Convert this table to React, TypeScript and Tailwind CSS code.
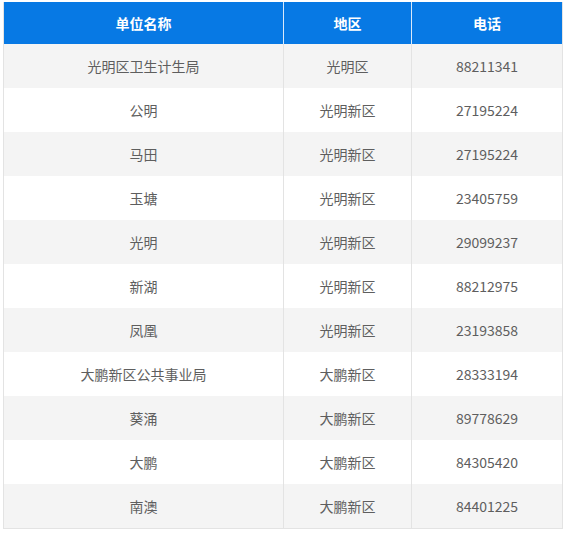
const rows: [string, string, string][] = [
  ["光明区卫生计生局", "光明区", "88211341"],
  ["公明", "光明新区", "27195224"],
  ["马田", "光明新区", "27195224"],
  ["玉塘", "光明新区", "23405759"],
  ["光明", "光明新区", "29099237"],
  ["新湖", "光明新区", "88212975"],
  ["凤凰", "光明新区", "23193858"],
  ["大鹏新区公共事业局", "大鹏新区", "28333194"],
  ["葵涌", "大鹏新区", "89778629"],
  ["大鹏", "大鹏新区", "84305420"],
  ["南澳", "大鹏新区", "84401225"],
];

const App = () => {
  return (
    <div
      className="pt-[2px] pl-[3px] bg-white"
      style={{ fontFamily: '"Microsoft YaHei", "Noto Sans CJK SC", "Noto Sans", sans-serif' }}
    >
      <div className="w-[560px] border-x border-b border-[#e3e3e3]">
        <div className="grid grid-cols-[280px_128px_150px] h-[42px] bg-[#0779e4] text-white text-[14px] font-bold">
          <div className="flex items-center justify-center border-r border-[#d9e9fa]">单位名称</div>
          <div className="flex items-center justify-center border-r border-[#d9e9fa]">地区</div>
          <div className="flex items-center justify-center">电话</div>
        </div>
        {rows.map((r, i) => (
          <div
            key={i}
            className={`grid grid-cols-[280px_128px_150px] h-[44px] text-[14px] text-[#5e5e5e] ${
              i % 2 === 0 ? "bg-[#f4f4f4]" : "bg-white"
            }`}
          >
            <div className="flex items-center justify-center border-r border-[#e3e3e3]">{r[0]}</div>
            <div className="flex items-center justify-center border-r border-[#e3e3e3]">{r[1]}</div>
            <div className="flex items-center justify-center">{r[2]}</div>
          </div>
        ))}
      </div>
    </div>
  );
};

export default App;
